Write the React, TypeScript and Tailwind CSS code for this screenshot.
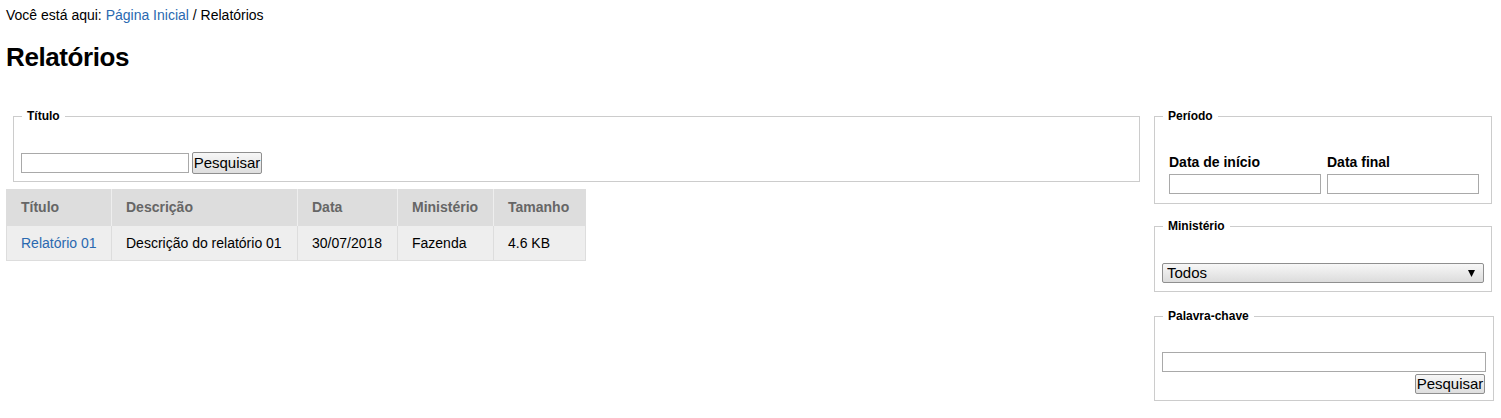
import React from "react";

function Btn() {
  return (
    <button
      type="button"
      className="w-[70px] rounded-[2px] border border-[#8f8f8f] bg-gradient-to-b from-[#f7f7f7] to-[#dedede] p-0 text-center text-[15px] leading-[18px] text-black"
    >
      Pesquisar
    </button>
  );
}

function Legend({ children }: { children: React.ReactNode }) {
  return (
    <legend className="ml-[1px] px-[5px] text-[12px] font-bold leading-[14px] text-black">
      {children}
    </legend>
  );
}

export default function App() {
  return (
    <div className="min-h-[418px] bg-white pl-[6px] pr-[9px] text-black font-['Liberation_Sans','Arial',sans-serif]">
      <div className="pt-[7px] text-[14px] leading-[16px]">
        Você está aqui: <a className="text-[#2a69b0]">Página Inicial</a> / Relatórios
      </div>
      <h1 className="mt-[19px] text-[26px] font-bold leading-[30px] tracking-[-0.4px]">Relatórios</h1>

      <div className="mt-[37px] flex items-start gap-[14px]">
        <div className="min-w-0 flex-1">
          <fieldset className="ml-[7px] border border-[#cccccc] px-[7px] pt-[29px] pb-[7px]">
            <Legend>Título</Legend>
            <div className="flex items-center gap-[3px]">
              <input className="block h-[20px] w-[168px] border border-[#a9a9a9] bg-white px-[2px] text-[14px] outline-none" />
              <div className="flex h-[22px]">
                <Btn />
              </div>
            </div>
          </fieldset>

          <table className="mt-[7px] w-[579px] table-fixed border-collapse border border-[#dddddd] text-left text-[14px]">
            <colgroup>
              <col className="w-[105px]" />
              <col className="w-[186px]" />
              <col className="w-[100px]" />
              <col className="w-[96px]" />
              <col className="w-[92px]" />
            </colgroup>
            <thead>
              <tr className="bg-[#dddddd]">
                {["Título", "Descrição", "Data", "Ministério", "Tamanho"].map((h) => (
                  <th
                    key={h}
                    className="h-[36px] border-r border-[#eeeeee] pl-[14px] pr-0 align-middle font-bold text-[#666666] last:border-r-0"
                  >
                    {h}
                  </th>
                ))}
              </tr>
            </thead>
            <tbody>
              <tr className="bg-[#eeeeee]">
                <td className="h-[35px] border border-[#dddddd] pl-[14px]">
                  <a className="text-[#2a69b0]">Relatório 01</a>
                </td>
                <td className="border border-[#dddddd] pl-[14px]">Descrição do relatório 01</td>
                <td className="border border-[#dddddd] pl-[14px]">30/07/2018</td>
                <td className="border border-[#dddddd] pl-[14px]">Fazenda</td>
                <td className="border border-[#dddddd] pl-[14px]">4.6 KB</td>
              </tr>
            </tbody>
          </table>
        </div>

        <div className="flex w-[338px] flex-col">
          <fieldset className="border border-[#cccccc] px-[7px] pt-[31px] pb-[9px]">
            <Legend>Período</Legend>
            <div className="ml-[7px] flex gap-[6px]">
              <div className="flex w-[152px] flex-col">
                <label className="text-[14px] font-bold leading-[16px]">Data de início</label>
                <input className="mt-[4px] block h-[20px] w-[152px] border border-[#a9a9a9] bg-white outline-none" />
              </div>
              <div className="flex w-[152px] flex-col">
                <label className="text-[14px] font-bold leading-[16px]">Data final</label>
                <input className="mt-[4px] block h-[20px] w-[152px] border border-[#a9a9a9] bg-white outline-none" />
              </div>
            </div>
          </fieldset>

          <fieldset className="mt-[15px] border border-[#cccccc] px-[7px] pt-[30px] pb-[8px]">
            <Legend>Ministério</Legend>
            <div className="relative h-[20px] w-[322px]">
              <select className="block h-[20px] w-[322px] appearance-none rounded-[2px] border border-[#8f8f8f] bg-gradient-to-b from-[#f7f7f7] to-[#dcdcdc] pl-[4px] text-[15px] leading-[18px] text-black outline-none">
                <option>Todos</option>
              </select>
              <svg
                className="pointer-events-none absolute right-[9px] top-[7px]"
                width="7"
                height="7"
                viewBox="0 0 7 7"
              >
                <polygon points="0,0 7,0 3.5,7" fill="#000" />
              </svg>
            </div>
          </fieldset>

          <fieldset className="mt-[17px] border border-[#cccccc] px-[7px] pt-[29px] pb-[6px]">
            <Legend>Palavra-chave</Legend>
            <input className="block h-[20px] w-[324px] border border-[#a9a9a9] bg-white outline-none" />
            <div className="mt-[2px] flex h-[20px] w-[323px] justify-end">
              <Btn />
            </div>
          </fieldset>
        </div>
      </div>
    </div>
  );
}
